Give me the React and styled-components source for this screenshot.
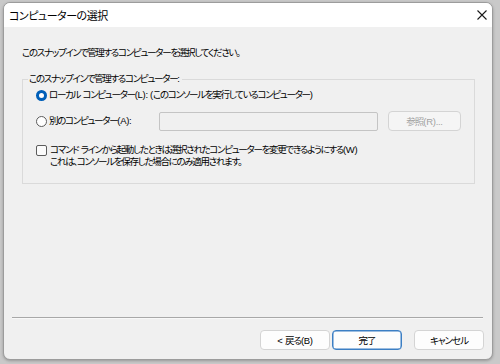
import styled, { createGlobalStyle } from "styled-components"

const Global = createGlobalStyle`
    html, body{
        margin: 0;
        padding: 0;
        background: #c9c9c9;
    }
    *{
        box-sizing: border-box;
    }
`

const font = `"Liberation Sans", "Noto Sans CJK JP", sans-serif`

export default function App(){
    return (
        <Page>
            <Global/>
            <Window>
                <TitleBar>
                    <Title>コンピューターの選択</Title>
                    <CloseIcon viewBox="0 0 10 10">
                        <path d="M0.5 0.5 L9.5 9.5 M9.5 0.5 L0.5 9.5" stroke="#1a1a1a" strokeWidth="1.1"/>
                    </CloseIcon>
                </TitleBar>
                <Body>
                    <Intro>このスナップインで管理するコンピューターを選択してください。</Intro>
                    <Group>
                        <Legend>このスナップインで管理するコンピューター<Ltn>:</Ltn></Legend>
                        <Row>
                            <Radio checked/>
                            <Label>ローカル<Ltn> </Ltn>コンピューター<Ltn>(L): (</Ltn>このコンソールを実行しているコンピューター<Ltn>)</Ltn></Label>
                        </Row>
                        <Row>
                            <Radio/>
                            <Label $width="110px">別のコンピューター<Ltn>(A):</Ltn></Label>
                            <TextBox/>
                            <Button disabled $width="73px">参照<Ltn>(R)...</Ltn></Button>
                        </Row>
                        <CheckRow>
                            <CheckBox/>
                            <Label>
                                コマンド<Ltn> </Ltn>ラインから起動したときは選択されたコンピューターを変更できるようにする<Ltn>(W)</Ltn><br/>
                                これは、コンソールを保存した場合にのみ適用されます。
                            </Label>
                        </CheckRow>
                    </Group>
                </Body>
                <Separator/>
                <Footer>
                    <Button><Ltn>&lt; </Ltn>戻る<Ltn>(B)</Ltn></Button>
                    <Button $primary>完了</Button>
                    <Gap/>
                    <Button>キャンセル</Button>
                </Footer>
            </Window>
        </Page>
    )
}

const Page = styled.div`
    width: 500px;
    height: 364px;
    padding: 2px 7px 4px 3px;
    font-family: ${font};
    font-feature-settings: "palt";
    letter-spacing: -1.3px;
    color: #000000;
`
const Ltn = styled.span`
    letter-spacing: -0.3px;
`
const Window = styled.div`
    width: 100%;
    height: 100%;
    background: #f0f0f0;
    border: 1px solid #9c9c9c;
    border-radius: 7px;
    overflow: hidden;
    display: flex;
    flex-direction: column;
    box-shadow: 0 1px 3px rgba(0,0,0,0.25);
`
const TitleBar = styled.div`
    height: 24px;
    flex: none;
    background: #ffffff;
    display: flex;
    align-items: center;
    justify-content: space-between;
    padding: 0 5px 0 5px;
`
const Title = styled.div`
    font-size: 11px;
    letter-spacing: -0.5px;
`
const CloseIcon = styled.svg`
    width: 10px;
    height: 10px;
`
const Body = styled.div`
    flex: 1;
    padding: 20px 19px 0 18px;
`
const Intro = styled.div`
    font-size: 9.5px;
    line-height: 12px;
    margin-bottom: 14px;
`
const Group = styled.fieldset`
    margin: 0;
    width: 452px;
    height: 111px;
    border: 1px solid #dadada;
    padding: 0 13px 0 13px;
`
const Legend = styled.legend`
    font-size: 9.5px;
    line-height: 12px;
    padding: 0 2px 0 1px;
    margin-left: -8px;
`
const Row = styled.div`
    display: flex;
    align-items: center;
    height: 20px;
    margin-bottom: 6px;
`
const CheckRow = styled.div`
    display: flex;
    align-items: flex-start;
    margin-top: 13px;
`
const Radio = styled.span`
    width: 11px;
    height: 11px;
    border-radius: 50%;
    flex: none;
    margin-right: 2px;
    background: #ffffff;
    border: ${p => p.checked ? "3px solid #005fb8" : "1px solid #5c5c5c"};
`
const CheckBox = styled.span`
    width: 11px;
    height: 11px;
    border-radius: 2px;
    flex: none;
    margin: 1px 3px 0 0;
    background: #fbfbfb;
    border: 1px solid #5c5c5c;
`
const Label = styled.span`
    font-size: 9.5px;
    line-height: 12px;
    width: ${p => p.$width || "auto"};
    flex: none;
`
const TextBox = styled.div`
    width: 219px;
    height: 19px;
    background: #f0f0f0;
    border: 1px solid #c4c4c4;
    border-radius: 2px;
    margin-right: 10px;
`
const Button = styled.button`
    font-family: ${font};
    font-feature-settings: "palt";
    letter-spacing: -1px;
    font-size: 9.5px;
    width: ${p => p.$width || "70px"};
    height: 20px;
    padding: 0;
    border-radius: 4px;
    background: ${p => p.disabled ? "#f5f5f5" : "#fdfdfd"};
    color: ${p => p.disabled ? "#a2a2a2" : "#000000"};
    border: 1px solid ${p => p.$primary ? "#3c7fc4" : "#d4d4d4"};
    box-shadow: ${p => p.$primary ? "inset 0 0 0 0.5px #3c7fc4" : "none"};
`
const Separator = styled.div`
    height: 2px;
    flex: none;
    margin: 0 9px 0 8px;
    background: #a8a8a8;
    border-bottom: 1px solid #f8f8f8;
`
const Footer = styled.div`
    height: 40px;
    flex: none;
    display: flex;
    align-items: flex-start;
    justify-content: flex-end;
    gap: 2px;
    padding: 11px 8px 0 0;
`
const Gap = styled.div`
    width: 8px;
`
